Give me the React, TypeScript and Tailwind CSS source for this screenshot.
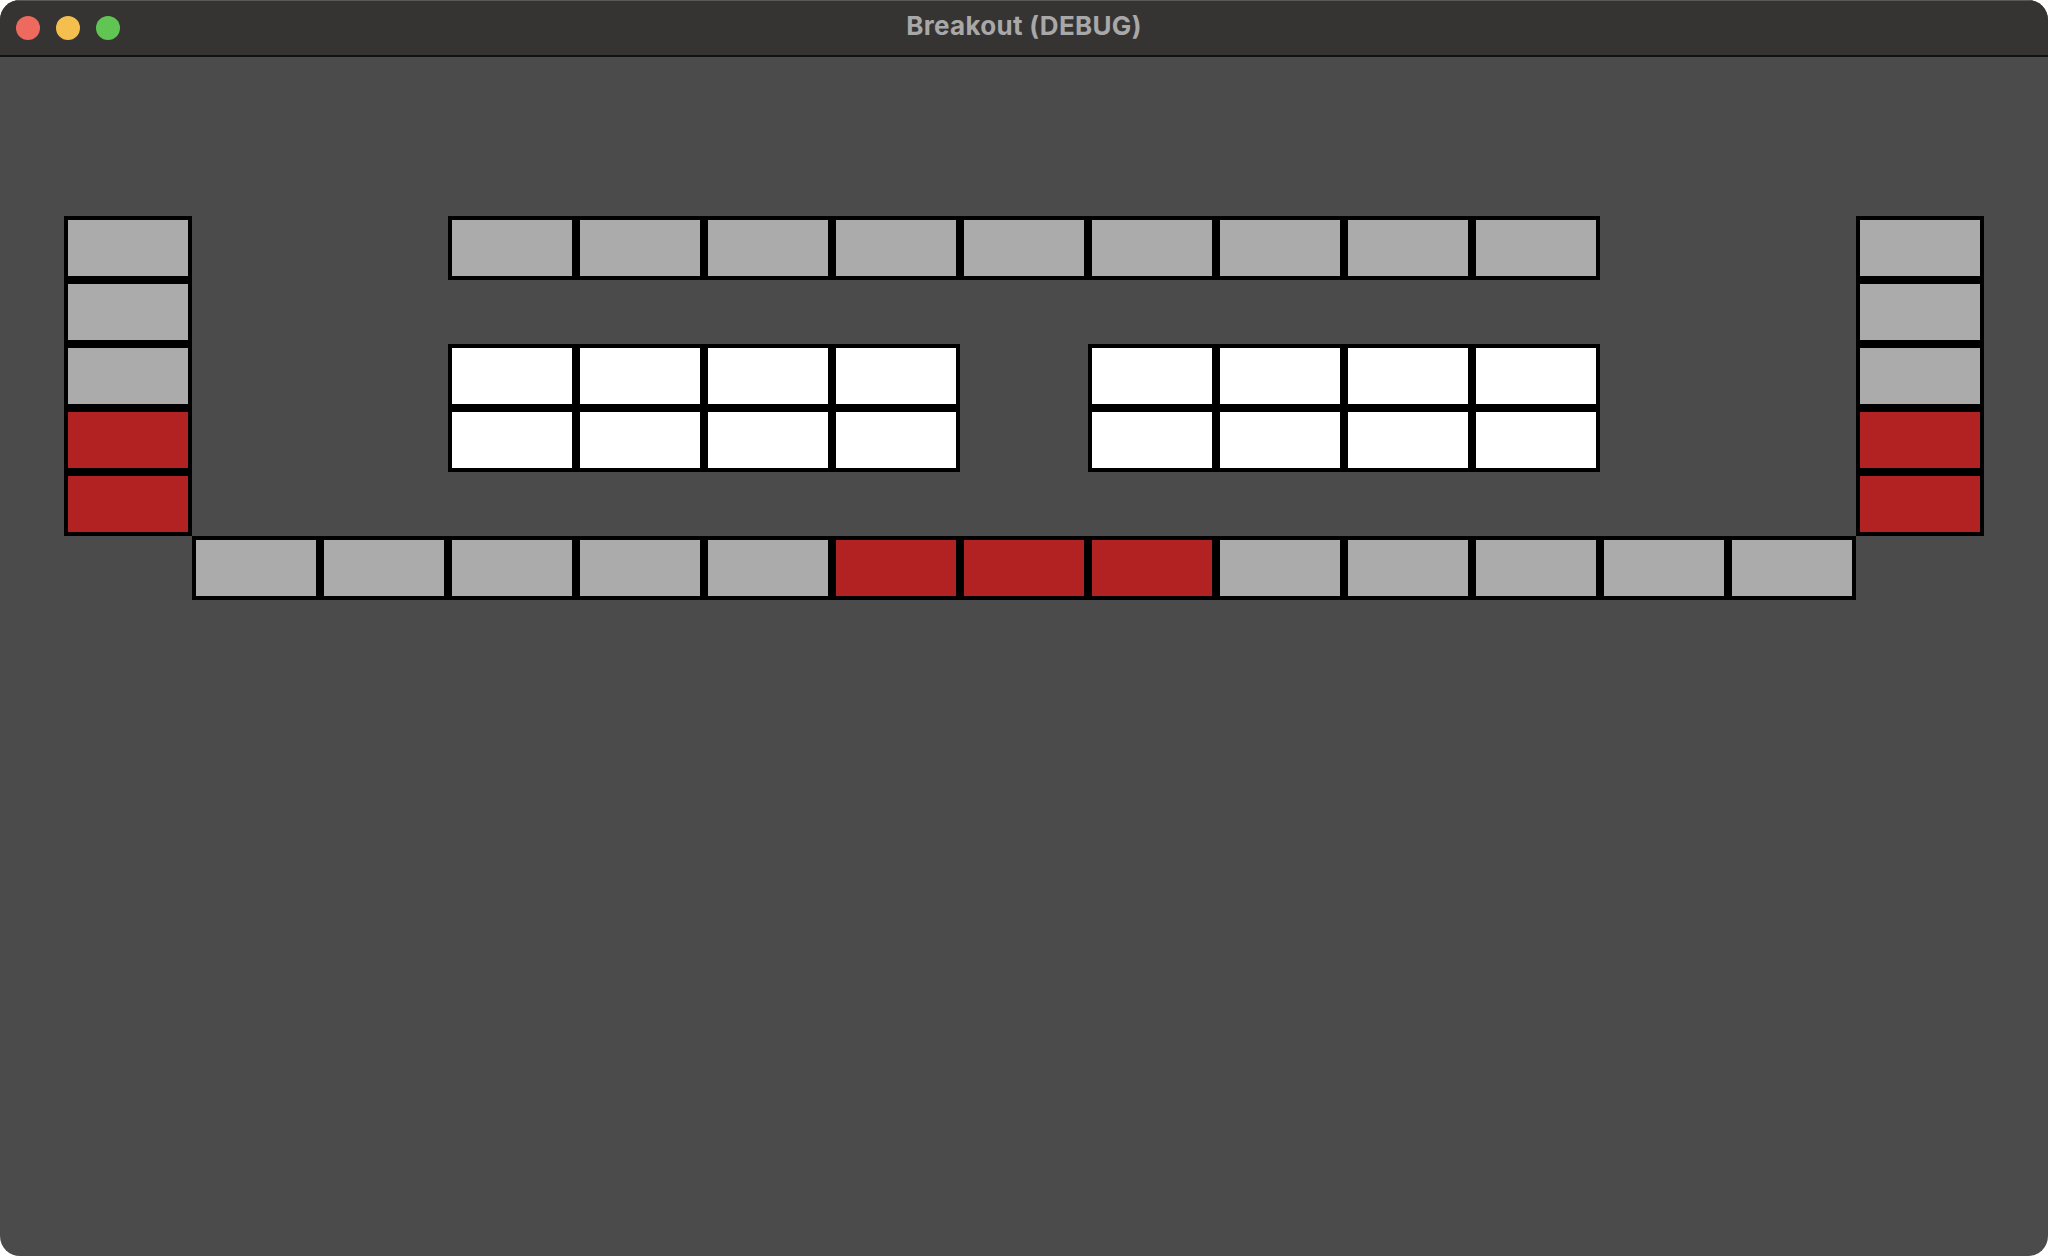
import React from 'react';

// G = gray, R = red, W = white, . = empty
const LEVEL = [
    'G..GGGGGGGGG..G',
    'G.............G',
    'G..WWWW.WWWW..G',
    'R..WWWW.WWWW..R',
    'R.............R',
    '.GGGGGRRRGGGGG.',
];

const brickColor = (c: string) => {
    switch (c) {
        case 'G': return 'bg-[#ababab]';
        case 'R': return 'bg-[#b22222]';
        case 'W': return 'bg-white';
        default: return '';
    }
};

export default function App() {
    return (
        <div className="w-[2048px] h-[1256px] bg-white">
            <div className="w-full h-full rounded-[20px] overflow-hidden flex flex-col bg-[#4b4b4b]">
                {/* Title bar */}
                <div className="h-[57px] shrink-0 bg-[#363432] border-t border-[#5a5958] border-b-2 border-b-[#111111] flex items-center relative">
                    <div className="flex items-center gap-4 pl-4 pb-[1px]">
                        <span className="w-6 h-6 rounded-full bg-[#ee6a5f]" />
                        <span className="w-6 h-6 rounded-full bg-[#f5bf4f]" />
                        <span className="w-6 h-6 rounded-full bg-[#61c554]" />
                    </div>
                    <div className="absolute inset-0 flex items-center justify-center pb-[5px] pointer-events-none">
                        <span className="text-[26px] font-bold text-[#a8a8a8] font-['Inter','Liberation_Sans',sans-serif] tracking-[0.3px]">
                            Breakout (DEBUG)
                        </span>
                    </div>
                </div>

                {/* Game area */}
                <div className="flex-1 pt-[159px] pl-[64px]">
                    <div className="grid grid-cols-[repeat(15,128px)] auto-rows-[64px]">
                        {LEVEL.flatMap((row, r) =>
                            row.split('').map((c, i) => (
                                <div key={`${r}-${i}`} className={c === '.' ? '' : `border-4 border-black ${brickColor(c)}`} />
                            ))
                        )}
                    </div>
                </div>
            </div>
        </div>
    );
}
